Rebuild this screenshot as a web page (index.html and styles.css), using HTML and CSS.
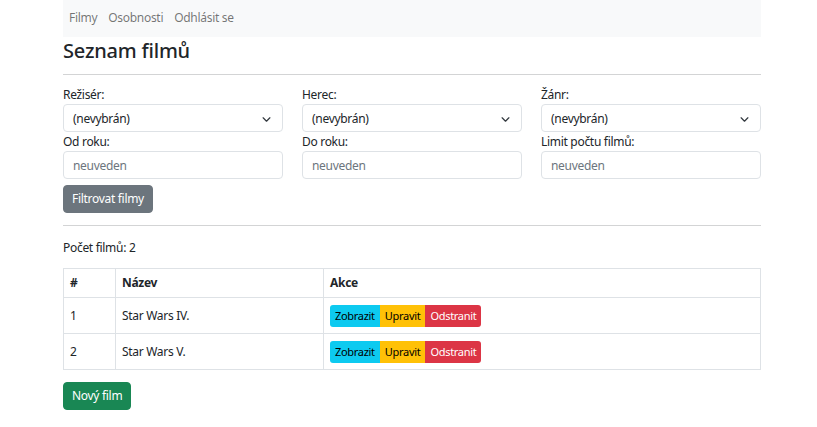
FILE: index.html
```html
<!DOCTYPE html>
<html lang="cs">
<head>
<meta charset="utf-8">
<title>Seznam filmů</title>
<link rel="stylesheet" href="styles.css">
</head>
<body>
<div class="container">
  <nav class="navbar">
    <a class="nav-link" href="#">Filmy</a>
    <a class="nav-link" href="#">Osobnosti</a>
    <a class="nav-link" href="#">Odhlásit se</a>
  </nav>
  <h1 class="title">Seznam filmů</h1>
  <hr class="divider">
  <form class="filters">
    <div class="field">
      <label class="label">Režisér:</label>
      <div class="select"><span>(nevybrán)</span><svg class="chev" viewBox="0 0 16 16" width="9" height="9"><path d="M2 5l6 6 6-6" fill="none" stroke="#343a40" stroke-width="2.2" stroke-linecap="round" stroke-linejoin="round"/></svg></div>
    </div>
    <div class="field">
      <label class="label">Herec:</label>
      <div class="select"><span>(nevybrán)</span><svg class="chev" viewBox="0 0 16 16" width="9" height="9"><path d="M2 5l6 6 6-6" fill="none" stroke="#343a40" stroke-width="2.2" stroke-linecap="round" stroke-linejoin="round"/></svg></div>
    </div>
    <div class="field">
      <label class="label">Žánr:</label>
      <div class="select"><span>(nevybrán)</span><svg class="chev" viewBox="0 0 16 16" width="9" height="9"><path d="M2 5l6 6 6-6" fill="none" stroke="#343a40" stroke-width="2.2" stroke-linecap="round" stroke-linejoin="round"/></svg></div>
    </div>
    <div class="field">
      <label class="label">Od roku:</label>
      <input class="input" placeholder="neuveden">
    </div>
    <div class="field">
      <label class="label">Do roku:</label>
      <input class="input" placeholder="neuveden">
    </div>
    <div class="field">
      <label class="label">Limit počtu filmů:</label>
      <input class="input" placeholder="neuveden">
    </div>
  </form>
  <button class="btn btn-secondary" type="button">Filtrovat filmy</button>
  <hr class="divider divider-2">
  <p class="count">Počet filmů: 2</p>
  <table class="table">
    <thead>
      <tr><th class="col-num">#</th><th class="col-name">Název</th><th>Akce</th></tr>
    </thead>
    <tbody>
      <tr>
        <td>1</td><td>Star Wars IV.</td>
        <td><div class="btn-group"><a class="sbtn info">Zobrazit</a><a class="sbtn warning">Upravit</a><a class="sbtn danger">Odstranit</a></div></td>
      </tr>
      <tr>
        <td>2</td><td>Star Wars V.</td>
        <td><div class="btn-group"><a class="sbtn info">Zobrazit</a><a class="sbtn warning">Upravit</a><a class="sbtn danger">Odstranit</a></div></td>
      </tr>
    </tbody>
  </table>
  <button class="btn btn-success" type="button">Nový film</button>
</div>
</body>
</html>
```

FILE: styles.css
```css
* { box-sizing: border-box; }
body {
  margin: 0;
  background: #fff;
  color: #212529;
  font-family: "Noto Sans", "Open Sans", sans-serif;
  font-size: 12px;
  line-height: 18px;
  letter-spacing: -0.3px;
}
.container {
  width: 698px;
  margin-left: 63px;
}
.navbar {
  height: 37px;
  background: #f8f9fa;
  display: flex;
  align-items: center;
  padding: 0 0 2px 0.5px;
}
.nav-link {
  color: rgba(0,0,0,.55);
  text-decoration: none;
  padding: 0 5.5px;
}
.title {
  margin: 2px 0 0;
  font-size: 20px;
  font-weight: 500;
  line-height: 24px;
  letter-spacing: -0.2px;
}
.divider {
  margin: 11px 0 11px;
  border: 0;
  border-top: 1px solid #d3d4d5;
}
.filters {
  display: grid;
  grid-template-columns: repeat(3, 1fr);
  column-gap: 19px;
  row-gap: 1px;
}
.field { display: flex; flex-direction: column; }
.label { display: block; height: 18px; }
.select, .input {
  height: 28px;
  border: 1px solid #dee2e6;
  border-radius: 4px;
  padding: 4px 9px;
  font: inherit;
  letter-spacing: -0.3px;
  color: #212529;
  background: #fff;
}
.select {
  display: flex;
  align-items: center;
  justify-content: space-between;
  padding-right: 11px;
  padding-top: 5px;
  padding-bottom: 3px;
}
.chev { display: block; }
.input::placeholder { color: #6c757d; }
.btn {
  display: inline-block;
  height: 28px;
  margin-top: 6px;
  padding: 0 8px;
  border: 1px solid transparent;
  border-radius: 4px;
  font: inherit;
  letter-spacing: -0.3px;
  color: #fff;
  cursor: pointer;
}
.btn-secondary { background: #6c757d; border-color: #6c757d; }
.btn-success { background: #198754; border-color: #198754; margin-top: 12px; }
.divider-2 { margin-top: 12px; }
.count { margin: 0; padding-top: 2px; }
.table {
  margin-top: 11px;
  width: 100%;
  border-collapse: collapse;
  border: 1px solid #dee2e6;
}
.table th, .table td {
  border: 1px solid #dee2e6;
  padding: 5px 6px;
  text-align: left;
  vertical-align: middle;
}
.table th { font-weight: 700; height: 29px; }
.table td { height: 36px; }
.col-num { width: 52px; }
.col-name { width: 208px; }
.btn-group { display: inline-flex; border-radius: 3px; overflow: hidden; }
.sbtn {
  display: inline-block;
  height: 22px;
  line-height: 22px;
  padding: 0 5px;
  font-size: 11px;
}
.info { background: #0dcaf0; color: #000; }
.warning { background: #ffc107; color: #000; }
.danger { background: #dc3545; color: #fff; }
```
